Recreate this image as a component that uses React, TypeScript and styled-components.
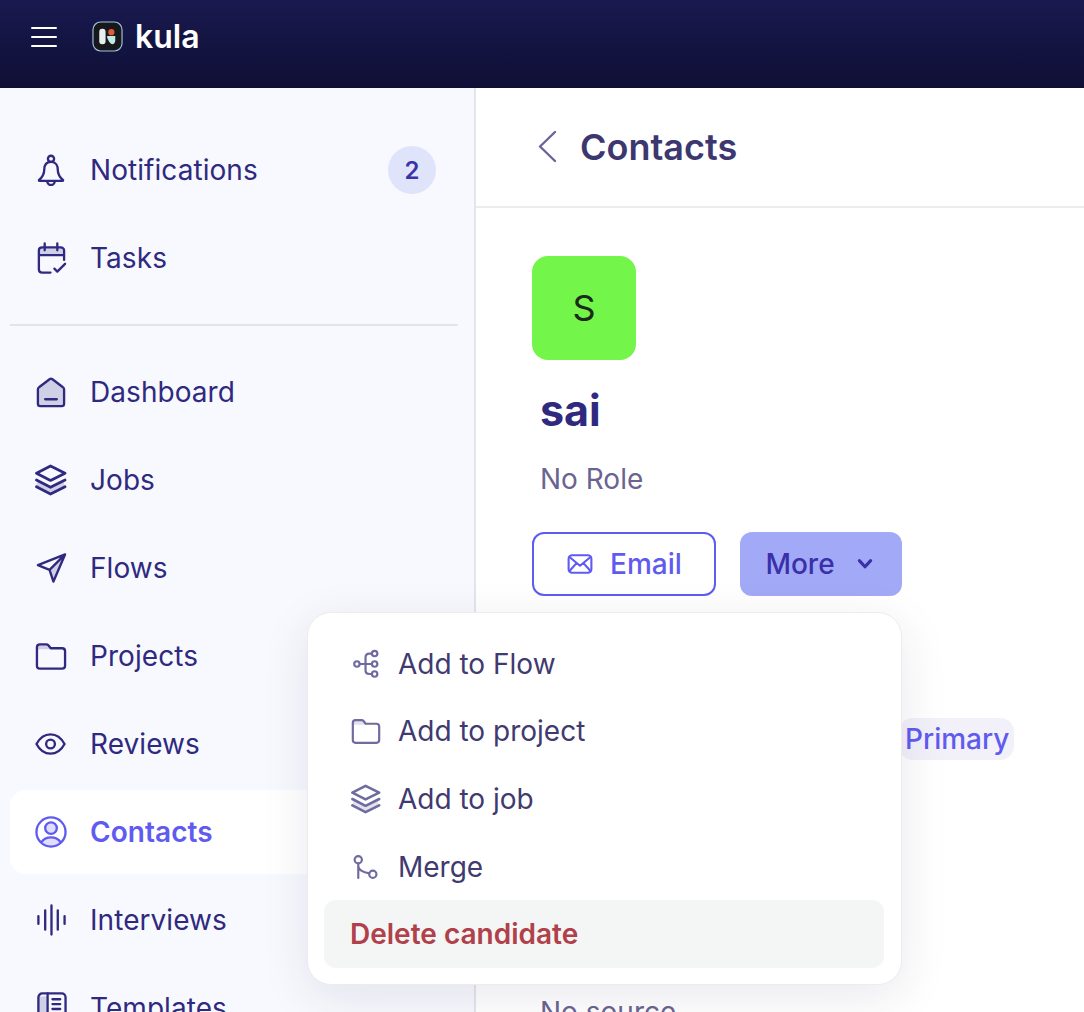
import React from 'react'
import styled, { createGlobalStyle } from 'styled-components'

const GlobalStyle = createGlobalStyle`
  html, body {
    margin: 0;
    padding: 0;
    height: 100%;
    overflow: hidden;
    background: #fff;
    font-family: Inter, "Noto Sans", sans-serif;
  }
  * { box-sizing: border-box; }
`

const Page = styled.div`
  position: relative;
  width: 1084px;
  height: 1012px;
  overflow: hidden;
`

const TopBar = styled.header`
  height: 88px;
  display: flex;
  align-items: center;
  padding: 0 0 15px 31px;
  background: linear-gradient(180deg, #19194f 0%, #0f0f36 100%);
`

const Burger = styled.div`
  width: 26px;
  display: flex;
  flex-direction: column;
  gap: 7px;
  margin: 1px 35px 0 0;
  span {
    height: 2px;
    background: #fff;
    border-radius: 1px;
  }
`

const LogoMark = styled.svg`
  width: 31px;
  height: 31px;
  flex: none;
  margin-top: -1px;
`

const Brand = styled.span`
  margin-left: 12px;
  color: #fff;
  font-size: 32px;
  font-weight: 600;
  line-height: 1;
`

const Body = styled.div`
  display: flex;
  height: 924px;
`

const Sidebar = styled.aside`
  width: 476px;
  flex: none;
  padding: 40px 16px 0 10px;
  background: #f8f9fe;
  border-right: 2px solid #e4e5ea;
  overflow: hidden;
`

const NavItem = styled.div<{ $active?: boolean }>`
  height: 84px;
  margin-bottom: 4px;
  padding: 0 22px 0 25px;
  display: flex;
  align-items: center;
  gap: 23px;
  flex: none;
  border-radius: 16px;
  font-size: 28px;
  letter-spacing: 0.06px;
  font-weight: ${(p) => (p.$active ? 600 : 400)};
  color: ${(p) => (p.$active ? '#5f5bf0' : '#2f2a80')};
  background: ${(p) => (p.$active ? '#fff' : 'transparent')};
`

const NavLabel = styled.span`
  flex: 1;
`

const Badge = styled.span`
  width: 48px;
  height: 48px;
  border-radius: 50%;
  display: flex;
  align-items: center;
  justify-content: center;
  font-size: 24px;
  font-weight: 600;
  color: #3a32a8;
  background: #e0e4fa;
`

const Divider = styled.hr`
  height: 2px;
  margin: 24px 0;
  border: 0;
  background: #e3e4e9;
`

const Main = styled.main`
  flex: 1;
  min-width: 0;
  overflow: hidden;
`

const PaneHeader = styled.div`
  height: 120px;
  padding: 0 0 0 59px;
  display: flex;
  align-items: center;
  gap: 9px;
  border-bottom: 2px solid #ececef;
`

const PaneTitle = styled.h1`
  margin: 0;
  font-size: 36px;
  font-weight: 600;
  color: #3d3770;
`

const Profile = styled.section`
  padding: 48px 0 0 56px;
`

const Avatar = styled.div`
  width: 104px;
  height: 104px;
  border-radius: 16px;
  display: flex;
  align-items: center;
  justify-content: center;
  background: #73f54a;
  color: #1c2a1c;
  font-size: 36px;
`

const Name = styled.h2`
  margin: 22px 0 0 8px;
  font-size: 43px;
  line-height: 56px;
  font-weight: 700;
  color: #2f2a80;
`

const Muted = styled.p<{ $top: number }>`
  margin: ${(p) => p.$top}px 0 0 8px;
  font-size: 28px;
  line-height: 36px;
  color: #6b6391;
`

const Actions = styled.div`
  margin-top: 35px;
  display: flex;
  gap: 24px;
`

const ActionButton = styled.button<{ $filled?: boolean }>`
  height: 64px;
  padding: ${(p) => (p.$filled ? '0 0 0 6px' : '0')};
  display: flex;
  align-items: center;
  justify-content: center;
  font-family: inherit;
  font-size: 28px;
  font-weight: 500;
  border-radius: 12px;
  width: ${(p) => (p.$filled ? '162px' : '184px')};
  gap: ${(p) => (p.$filled ? '12px' : '16px')};
  color: ${(p) => (p.$filled ? '#3a30a8' : '#5f5bf0')};
  background: ${(p) => (p.$filled ? '#a2aaf8' : '#fff')};
  border: ${(p) => (p.$filled ? '0' : '2px solid #5f5bf0')};
`

const ContactRow = styled.div`
  margin-top: 122px;
  padding-left: 367px;
`

const Pill = styled.span`
  display: inline-block;
  height: 42px;
  padding: 0 5px 0 6px;
  border-radius: 14px;
  font-size: 28px;
  line-height: 42px;
  font-weight: 500;
  color: #5f5bf0;
  background: #f2f1fa;
`

const Menu = styled.div`
  position: absolute;
  left: 307px;
  top: 612px;
  width: 595px;
  padding: 17px 17px 16px 16px;
  border: 1px solid #ececef;
  border-radius: 24px;
  background: #fff;
  box-shadow: 0 12px 48px rgba(40, 40, 80, 0.1);
`

const MenuItem = styled.div<{ $danger?: boolean }>`
  height: 67.6px;
  padding: 0 26px 0 27px;
  display: flex;
  align-items: center;
  gap: 17px;
  border-radius: 12px;
  font-size: 28px;
  font-weight: ${(p) => (p.$danger ? 600 : 400)};
  color: ${(p) => (p.$danger ? '#b0404a' : '#3f3a70')};
  background: ${(p) => (p.$danger ? '#f4f6f5' : 'transparent')};
`

const DangerLabel = styled.span`
  margin-left: -1px;
`

const Glyph = styled.svg<{ $tone?: string; $size?: number }>`
  width: ${(p) => p.$size ?? 32}px;
  height: ${(p) => p.$size ?? 32}px;
  flex: none;
  color: ${(p) => p.$tone ?? 'currentColor'};
  fill: none;
  stroke: currentColor;
  stroke-width: 2.4;
  stroke-linecap: round;
  stroke-linejoin: round;
  .tint {
    fill: currentColor;
    fill-opacity: 0.2;
    stroke: none;
  }
`

const icons: Record<string, React.ReactNode> = {
  bell: (
    <>
      <circle cx="16.5" cy="4.5" r="3.2" />
      <path d="M16.5 7.7C11.5 7.7 9.5 11.5 9.5 16c0 4.5-2 7.500-5.500 10.500 0 .5.300.800 1 .800h23c.700 0 1-.300 1-.800-3.500-3-5.500-6-5.500-10.500 0-4.500-2-8.300-6.500-8.300Z" />
      <path d="M12.500 27.500c.500 3 2 4 4 4s3.500-1 4-4" />
    </>
  ),
  calendar: (
    <>
      <path className="tint" d="M4 12V8c0-1.500 1-3 3-3h20c2 0 3 1.500 3 3v4Z" />
      <path d="M16 31H7.500C5 31 4 29.500 4 27.500V8c0-2 1.500-3 3.500-3h19C28.500 5 30 6.500 30 8v10M4 13h26M10 1v7M23 1v7" />
      <path d="m20 27 3 3 8-8" />
    </>
  ),
  house: (
    <>
      <path className="tint" d="M16.500 2 30 12v16a2.500 2.500 0 0 1-2.500 2.500h-22A2.500 2.500 0 0 1 3 28V12Z" />
      <path d="M15 2.800a2.500 2.500 0 0 1 3 0l10.500 8a3 3 0 0 1 1.500 2.500V28a2.500 2.500 0 0 1-2.500 2.500h-22A2.500 2.500 0 0 1 3 28V13.300a3 3 0 0 1 1.500-2.500Z" />
      <path d="M10.500 23.500h12" />
    </>
  ),
  stack: (
    <g strokeWidth={2.8}>
      <path className="tint" d="m3 17 13 7 13-7 2 6-15 8-15-8Z" />
      <path d="M16 1.500 31 9 16 16.500 1.500 9Z" />
      <path d="m1.500 16 14.500 7.500 15-7.500" />
      <path d="m1.500 23 14.500 7.500 15-7.500" />
    </g>
  ),
  plane: (
    <>
      <path className="tint" d="M31 2 15 18l4 12Z" />
      <path d="M31 2 3 13l12 5 4 12ZM15 18 31 2" />
    </>
  ),
  folder: (
    <>
      <path className="tint" d="M2 15V7a3 3 0 0 1 3-3h8l5 5H5a3 3 0 0 0-3 3Z" />
      <path d="M2 7a3 3 0 0 1 3-3h6.500a3 3 0 0 1 2.300 1l2.400 3H28a3 3 0 0 1 3 3v15a3 3 0 0 1-3 3H5a3 3 0 0 1-3-3Z" />
    </>
  ),
  eye: (
    <>
      <path d="M1.500 16C5 9.500 10 6 16 6s11 3.500 14.500 10C27 22.500 22 26 16 26S5 22.500 1.500 16Z" />
      <circle cx="16" cy="16" r="4.500" />
    </>
  ),
  contact: (
    <>
      <circle className="tint" cx="16.500" cy="12" r="6" />
      <path className="tint" d="M7 26c2-3 5-4.500 9.500-4.500S24 23 26 26c-2.500 3-6 5-9.500 5S9.500 29 7 26Z" />
      <circle cx="16.500" cy="16" r="15" />
      <circle cx="16.500" cy="12" r="6" />
      <path d="M7 26c2-3 5-4.500 9.500-4.500S24 23 26 26" />
    </>
  ),
  wave: <path d="M3.500 12v8M10.500 6v20M17 1v30M23.500 6v20M30.500 12v8" />,
  template: (
    <>
      <path className="tint" d="M4 4h9v24H4Z" />
      <rect x="3.500" y="1" width="28" height="30" rx="4" />
      <path d="M13 1v30M18 7h8M18 12h8M18 17h8" />
    </>
  ),
  email: (
    <>
      <rect x="3" y="6" width="26" height="20" rx="4" />
      <path d="m4 8 12 10 12-10M4 24l8-9M28 24l-8-9" />
    </>
  ),
  chevronDown: <path strokeWidth={2.8} d="m11 13 5 5.500 5-5.500" />,
  back: <path d="M20 3 5 17.500 20 32" />,
  flow: (
    <>
      <circle cx="6.500" cy="16" r="3" />
      <circle cx="26" cy="4.500" r="3" />
      <circle cx="26" cy="16" r="3" />
      <circle cx="26" cy="27" r="3" />
      <path d="M9.500 16H23M23 4.500h-3c-2.500 0-4 1.500-4 4v15c0 2.500 1.500 3.500 4 3.500h3" />
    </>
  ),
  merge: (
    <>
      <circle cx="8" cy="8" r="4" />
      <circle cx="24" cy="24" r="4" />
      <path d="M8 12v16M8 15c0 4 3 6.500 12 8" />
    </>
  ),
}

const Icon: React.FC<{ name: string; tone?: string; size?: number; view?: string }> = ({
  name,
  tone,
  size,
  view = '0 0 33 32',
}) => (
  <Glyph viewBox={view} $tone={tone} $size={size}>
    {icons[name]}
  </Glyph>
)

const Logo = () => (
  <LogoMark viewBox="0 0 32 32">
    <rect x="1" y="1" width="30" height="30" rx="8" fill="#17181c" stroke="#9fc3dc" strokeWidth="1.200" />
    <rect x="7.500" y="8" width="6.500" height="16" rx="3" fill="#e8eeee" />
    <circle cx="20" cy="11.500" r="3.200" fill="#e2593a" />
    <path d="M15.500 15.500H24v5c0 2-1.500 3.500-3 3.500-2 0-5.500-5-5.500-8.500Z" fill="#bfe9e2" />
  </LogoMark>
)

const topNav = [
  { icon: 'bell', label: 'Notifications', badge: 2 },
  { icon: 'calendar', label: 'Tasks' },
]

const mainNav = [
  { icon: 'house', label: 'Dashboard' },
  { icon: 'stack', label: 'Jobs' },
  { icon: 'plane', label: 'Flows' },
  { icon: 'folder', label: 'Projects' },
  { icon: 'eye', label: 'Reviews' },
  { icon: 'contact', label: 'Contacts', active: true },
  { icon: 'wave', label: 'Interviews' },
  { icon: 'template', label: 'Templates' },
]

const menuItems = [
  { icon: 'flow', label: 'Add to Flow' },
  { icon: 'folder', label: 'Add to project' },
  { icon: 'stack', label: 'Add to job' },
  { icon: 'merge', label: 'Merge' },
]

const App = () => {
  return (
    <Page>
      <GlobalStyle />
      <TopBar>
        <Burger>
          <span />
          <span />
          <span />
        </Burger>
        <Logo />
        <Brand>kula</Brand>
      </TopBar>
      <Body>
        <Sidebar>
          {topNav.map((item) => (
            <NavItem key={item.label}>
              <Icon name={item.icon} />
              <NavLabel>{item.label}</NavLabel>
              {item.badge && <Badge>{item.badge}</Badge>}
            </NavItem>
          ))}
          <Divider />
          {mainNav.map((item) => (
            <NavItem key={item.label} $active={item.active}>
              <Icon name={item.icon} />
              <NavLabel>{item.label}</NavLabel>
            </NavItem>
          ))}
        </Sidebar>
        <Main>
          <PaneHeader>
            <Icon name="back" tone="#6b6399" size={36} view="0 0 36 36" />
            <PaneTitle>Contacts</PaneTitle>
          </PaneHeader>
          <Profile>
            <Avatar>S</Avatar>
            <Name>sai</Name>
            <Muted $top={23}>No Role</Muted>
            <Actions>
              <ActionButton>
                <Icon name="email" size={28} view="0 0 32 32" />
                Email
              </ActionButton>
              <ActionButton $filled>
                More
                <Icon name="chevronDown" size={36} view="0 0 32 32" />
              </ActionButton>
            </Actions>
            <ContactRow>
              <Pill>Primary</Pill>
            </ContactRow>
            <Muted $top={234}>No source</Muted>
          </Profile>
        </Main>
      </Body>
      <Menu>
        {menuItems.map((item) => (
          <MenuItem key={item.label}>
            <Icon name={item.icon} tone="#6f6aa0" size={30} />
            {item.label}
          </MenuItem>
        ))}
        <MenuItem $danger>
          <DangerLabel>Delete candidate</DangerLabel>
        </MenuItem>
      </Menu>
    </Page>
  )
}

export default App
